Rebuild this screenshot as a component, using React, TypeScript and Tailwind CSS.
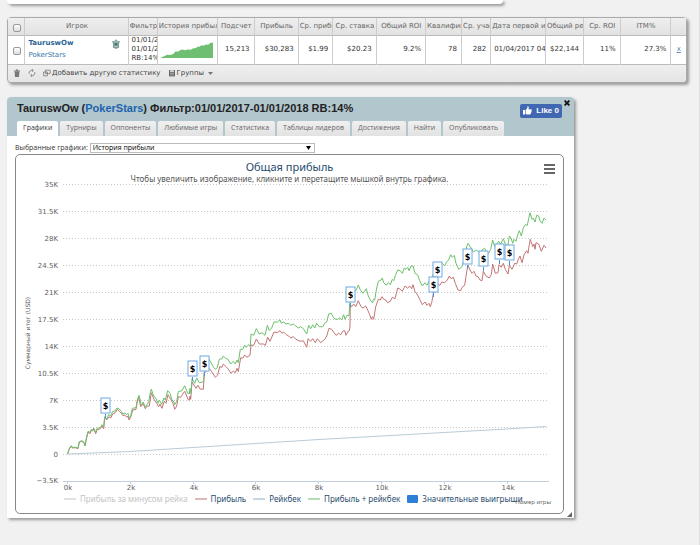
import { useState } from "react"
import { clsx } from "clsx"

const VERDANA = "font-['DejaVu_Sans',Verdana,sans-serif]"
const NARROW = "font-['Open_Sans','Noto_Sans',sans-serif]"
const LUCIDA = "font-['Noto_Sans','Open_Sans',sans-serif]"

interface Column {
  label: string
  width: string
  value: React.ReactNode
  align?: string
}

const columns: Column[] = [
  { label: "Игрок", width: "w-[15.2%]", value: <PlayerCell />, align: "text-left" },
  {
    label: "Фильтр",
    width: "w-[4.3%]",
    value: <>01/01/2017-<br />01/01/2018<br />RB:14%</>,
    align: "text-left",
  },
  { label: "История прибыли", width: "w-[8.9%]", value: <Sparkline /> },
  { label: "Подсчет", width: "w-[5.4%]", value: "15,213" },
  { label: "Прибыль", width: "w-[6.5%]", value: "$30,283" },
  { label: "Ср. прибыль", width: "w-[5.1%]", value: "$1.99" },
  { label: "Ср. ставка", width: "w-[6.4%]", value: "$20.23" },
  { label: "Общий ROI", width: "w-[7.3%]", value: "9.2%" },
  { label: "Квалификация", width: "w-[5.3%]", value: "78" },
  { label: "Ср. участников", width: "w-[4.3%]", value: "282" },
  { label: "Дата первой игры", width: "w-[8.1%]", value: "01/04/2017 04:12", align: "text-left" },
  { label: "Общий рейк", width: "w-[5.6%]", value: "$22,144" },
  { label: "Ср. ROI", width: "w-[5.4%]", value: "11%" },
  { label: "ITM%", width: "w-[7.5%]", value: "27.3%" },
]

const tabs = [
  "Графики",
  "Турниры",
  "Оппоненты",
  "Любимые игры",
  "Статистика",
  "Таблицы лидеров",
  "Достижения",
  "Найти",
  "Опубликовать",
]

const legend = [
  { label: "Прибыль за минусом рейка", swatch: "h-[2px] w-3 bg-[#e2e2e2]", text: "text-[#c4c4c4]" },
  { label: "Прибыль", swatch: "h-[2px] w-3 bg-[#e0b8b8]", text: "text-[#274b6d]" },
  { label: "Рейкбек", swatch: "h-[2px] w-3 bg-[#c8d6e2]", text: "text-[#274b6d]" },
  { label: "Прибыль + рейкбек", swatch: "h-[2px] w-3 bg-[#b4deb4]", text: "text-[#274b6d]" },
  { label: "Значительные выигрыши", swatch: "h-2 w-[11px] rounded-[1px] bg-[#2f7ed8]", text: "text-[#274b6d]" },
]

const yTicks = ["35K", "31.5K", "28K", "24.5K", "21K", "17.5K", "14K", "10.5K", "7K", "3.5K", "0", "−3.5K"]
const xTicks = ["0k", "2k", "4k", "6k", "8k", "10k", "12k", "14k"]

const wins = [
  [105, 406], [192, 369], [204, 364], [350, 295], [437, 270],
  [433, 285], [467, 257], [483, 259], [499, 252], [509, 253],
]

// Series are stored in sections, three units per chart unit, relative to x0/y0
function section(x0: number, y0: number, points: string) {
  return points
    .split(" ")
    .map((p) => {
      const [x, y] = p.split(",").map(Number)
      return `${(x0 + x / 3).toFixed(1)},${(y0 + y / 3).toFixed(1)}`
    })
    .join(" ")
}

const totalSeries = [
  section(10, 340, "173,341 178,325 184,317 187,322 196,322 204,324 208,305 215,302 222,307 225,317 228,300 234,274 240,277 244,268 248,270 251,264 257,277 262,264 267,264 272,262 276,254 281,260 284,230 290,236 296,224 302,228 308,214 315,213 321,204 328,207 334,214 338,222 345,219 350,224 354,220 357,234 362,228 367,205 378,203 382,180 387,166 391,182 394,196 400,186 405,202 410,195 416,186 420,162 424,147 430,165 438,176 444,190 448,180 455,193 462,174 466,180 473,152 480,160 486,180 492,186 494,194 500,184 505,155 516,152 524,137 528,147 533,160 537,160"),
  section(180, 300, "28,282 30,265 33,280 36,236 44,250 50,234 58,248 66,247 71,242 73,215 80,170 88,178 92,187 100,200 106,208 112,203 118,178 126,176 130,168 137,175 144,178 152,192 160,184 166,192 171,180 175,188 181,148 188,148 194,136 198,142 207,134 211,138 213,102 221,106 229,86 238,102 246,98 255,106 262,76 268,92 275,84 282,66 292,66 300,60 304,70 310,66 318,72 326,70 332,76 340,72 347,78 356,84 362,80 370,86 380,102 386,76 392,86 398,74 404,84 410,70 418,80 428,80 434,70 440,66 446,42 454,40 460,52"),
  section(335, 220, "0,297 8,298 14,294 20,299 26,284 30,298 36,286 42,288 44,250 48,240 58,215 64,210 70,195 76,210 84,220 94,206 100,228 108,244 113,248 115,238 119,240 124,210 130,184 138,180 142,174 146,188 154,196 160,188 166,194 172,178 176,182 182,164 188,150 196,152 202,160 208,144 213,148 218,142 222,152 228,138 234,138 240,160 248,165 254,182 262,198 270,188 276,196 282,184 292,170 300,150 314,130"),
  section(440, 200, "5,188 14,198 20,185 26,180 32,164 37,172 43,166 48,190 56,208 66,200 74,170 80,140 84,130 92,142 100,156 110,150 118,158 126,150 134,145 140,158 146,160 152,148 158,120 164,140 170,132 176,124 182,132 190,116 196,132 204,136 208,108 213,114 218,130 222,118 228,124 232,108 238,92 244,108 250,84 256,74 262,76 266,56 270,38 276,58 280,54 285,66 290,46 296,48 300,62 306,70 312,54 318,60"),
].join(" ")

const profitSeries = [
  section(10, 340, "173,341 178,327 184,319 187,324 196,323 204,326 208,307 215,304 222,308 225,318 228,302 234,277 240,281 244,271 248,273 251,267 257,281 262,268 267,268 272,265 276,258 281,266 284,234 290,240 297,230 302,234 308,222 316,218 322,208 328,214 334,220 338,226 345,226 350,232 354,228 357,240 362,232 368,210 378,208 382,184 386,172 392,200 400,192 406,206 412,198 418,198 424,158 432,178 440,190 446,200 450,192 456,205 463,184 468,190 474,164 482,178 489,190 494,208 500,198 505,170 512,172 517,164 524,154 529,165 535,180"),
  section(180, 300, "28,300 30,288 32,298 36,246 40,252 48,265 54,256 60,267 70,268 73,220 88,205 95,215 106,232 113,225 119,200 126,202 130,192 138,200 145,207 153,220 160,213 166,218 171,205 175,215 182,173 188,175 194,165 200,172 210,166 213,135 221,136 229,117 238,132 250,132 256,136 263,112 270,124 282,96 291,98 300,92 306,100 311,96 319,104 326,108 332,114 340,110 348,118 356,122 364,124 370,122 380,142 384,116 392,124 398,116 406,128 412,116 422,128 434,118 440,108 447,85 455,88 462,98 468,106 476,100 482,104 490,92 494,92 498,106 504,94 508,92"),
  section(335, 220, "45,320 46,254 50,260 56,252 62,260 70,242 78,260 84,264 92,258 98,270 104,284 109,298 112,290 116,298 122,260 130,238 136,240 141,230 146,238 152,240 158,248 166,244 172,232 180,236 188,204 196,208 202,214 210,198 218,205 224,198 230,206 234,194 240,215 246,222 254,238 262,254 270,246 276,256 282,250 286,260 290,248 296,215 306,188 313,196"),
  section(440, 200, "0,256 5,246 14,248 22,240 28,228 33,236 40,232 46,250 54,270 62,272 66,262 74,256 80,215 84,196 90,210 96,220 102,214 108,228 114,230 120,240 126,242 130,214 138,228 148,234 154,224 158,192 166,220 174,218 177,194 184,202 190,190 196,208 204,222 208,196 216,208 224,190 230,192 234,180 240,168 246,188 252,164 260,152 264,160 268,134 271,118 278,140 282,132 285,148 288,128 296,132 304,154 312,136 318,144"),
].join(" ")

function PlayerCell() {
  return (
    <div className="flex items-start justify-between pr-1">
      <div className="flex flex-col gap-[3px]">
        <a href="#player" className="font-bold text-[#2a6496]">TauruswOw</a>
        <a href="#network" className="text-[#3a76a8]">PokerStars</a>
      </div>
      <svg viewBox="0 0 8 10" className="h-[10px] w-2" aria-hidden="true">
        <path d="M4 0 5.2 1.8 8 2.6 6.8 5 7.2 8.6 4 10 .8 8.6 1.2 5 0 2.6 2.8 1.8Z" fill="#7f9c99" />
        <path d="M2.2 3h3.6M2.4 7.4h3.2" stroke="#dfe9e4" strokeWidth=".7" />
        <circle cx="4" cy="5.2" r="1.2" fill="#37766d" />
      </svg>
    </div>
  )
}

function Sparkline() {
  return (
    <svg viewBox="0 0 51 16" className="block h-4 w-full" preserveAspectRatio="none" aria-hidden="true">
      <path
        d="M0 16V15.4L3 14.2 6 12.8 9 12.9 12 12 14 9.4 17 9.6 19 8 21 7.4 23 8.2 26 7.6 29 7.8 31 6.4 34 6 36 4.6 37 5 39 3.4 42 3.6 44 2.4 46 2.8 48 1 51 .4V16Z"
        fill="#6fbf73"
      />
    </svg>
  )
}

function StatsTable() {
  return (
    <section className="rounded-[4px] border border-[#aaa] bg-[#ececec] shadow-[2px_2px_3px_#999]">
      <table className="w-full table-fixed border-collapse text-[7px] leading-[9px] text-[#333]">
        <thead>
          <tr className="h-[17px] bg-linear-to-b from-[#efefef] to-[#e2e2e2] text-[#666]">
            <th className="w-[2.5%] border-r border-[#ccc] pt-1 pl-px">
              <TickBox label="Выбрать все" />
            </th>
            {columns.map((col) => (
              <th
                key={col.label}
                className={clsx("overflow-hidden border-r border-[#ccc] font-normal whitespace-nowrap", col.width)}
              >
                <div className="ml-px flex justify-center-safe overflow-hidden">{col.label}</div>
              </th>
            ))}
            <th className="w-[2.2%]" aria-label="Удалить" />
          </tr>
        </thead>
        <tbody>
          <tr className="h-[29px] border-y border-[#bbb] bg-white">
            <td className="border-r border-[#ccc] pt-1 pl-px text-center">
              <TickBox label="Выбрать TauruswOw" />
            </td>
            {columns.map((col) => (
              <td
                key={col.label}
                className={clsx(
                  "overflow-hidden border-r border-[#ccc] pr-1 pl-[3px] whitespace-nowrap",
                  col.align ?? "text-right"
                )}
              >
                {col.value}
              </td>
            ))}
            <td className="text-center">
              <a href="#remove" className="text-[#5b86b3] underline">x</a>
            </td>
          </tr>
        </tbody>
      </table>
      <div className="flex h-[17px] items-center gap-[7px] rounded-b-[4px] bg-linear-to-b from-[#efefef] to-[#e4e4e4] px-[5px] text-[7px] text-[#444]">
        <button aria-label="Удалить">
          <svg viewBox="0 0 8 8" className="size-2" fill="#777">
            <path d="M1 1.6h6v.8H1zM3 .6h2v1H3zM1.6 2.8h4.8L6 8H2z" />
          </svg>
        </button>
        <button aria-label="Обновить">
          <svg viewBox="0 0 8 8" className="size-2" fill="none" stroke="#777" strokeWidth=".8">
            <path d="M1.3 5A2.8 2.8 0 0 1 4.8 1.4M6.7 3A2.8 2.8 0 0 1 3.2 6.6M4 .2 5.4 1.5 4 2.8M4 5.2 2.6 6.5 4 7.8" />
          </svg>
        </button>
        <button className="flex items-center gap-px">
          <svg viewBox="0 0 8 8" className="size-2" fill="#eee" stroke="#777" strokeWidth=".8">
            <path d="M.6 3h3.8v3.8H.6zM2.4 1.2h4.8v3.4H2.4z" />
          </svg>
          Добавить другую статистику
        </button>
        <button className="flex items-center gap-px">
          <svg viewBox="0 0 8 8" className="size-2">
            <path d="M1 1h6v6.4H1z" fill="#666" />
            <path d="M2.4 1.2h3.2v1.8H2.4zM2 4.6h4M2 6h4" fill="#ddd" stroke="#ddd" strokeWidth=".5" />
          </svg>
          Группы
          <svg viewBox="0 0 5 3" className="ml-[3px] h-[3px] w-[5px]" fill="#777">
            <path d="M0 0h5L2.5 3z" />
          </svg>
        </button>
      </div>
    </section>
  )
}

function TickBox({ label }: { label: string }) {
  return (
    <input
      type="checkbox"
      aria-label={label}
      className="size-2 appearance-none rounded-[2px] border border-[#999] bg-linear-to-b from-white to-[#ddd] align-middle checked:bg-[#777]"
    />
  )
}

function ProfitChart() {
  return (
    <svg
      viewBox="16 183 547 311"
      className={clsx("block w-full overflow-visible", VERDANA)}
      role="img"
      aria-label="Общая прибыль"
    >
      <g stroke="#c8c8c8" strokeWidth="1" strokeDasharray="1 2">
        {yTicks.slice(0, -1).map((tick, i) => (
          <line key={tick} x1="63" x2="549" y1={184.5 + Math.round(i * 26.95)} y2={184.5 + Math.round(i * 26.95)} />
        ))}
      </g>
      <g fill="#606060" fontSize="7" textAnchor="end">
        {yTicks.map((tick, i) => (
          <text key={tick} x="58" y={187 + Math.round(i * 26.95)}>{tick}</text>
        ))}
      </g>
      <path d="M63 481.5H549" stroke="#c0d0e0" />
      <g fill="#606060" fontSize="7" textAnchor="middle">
        {xTicks.map((tick, i) => (
          <g key={tick}>
            <path d={`M${67.5 + Math.round(i * 62.8)} 481v3`} stroke="#c0d0e0" />
            <text x={68 + Math.round(i * 62.8)} y="490">{tick}</text>
          </g>
        ))}
      </g>
      <text transform="translate(30 333) rotate(-90)" fill="#555" fontSize="6" textAnchor="middle">
        Суммарный итог (USD)
      </text>
      <g fill="none" strokeWidth="1" strokeLinejoin="round">
        <path d="M67.5 454 130 451.5 193 447.5 256 443.5 319 439.5 382 436 444 432.5 507 429 546 426.5" stroke="#b9cbd8" />
        <polyline points={profitSeries} stroke="#c47474" />
        <polyline points={totalSeries} stroke="#6cc06c" />
      </g>
      {wins.map(([x, y]) => (
        <g key={x}>
          <path d={`M${x + 0.5} ${y + 8}v4`} stroke="#4a90d9" />
          <rect x={x - 4} y={y - 8} width="9" height="15" fill="#fff" stroke="#6fa8e6" />
          <text x={x + 0.5} y={y + 3} fontSize="8" fontWeight="bold" textAnchor="middle">$</text>
        </g>
      ))}
    </svg>
  )
}

function ChartCard() {
  return (
    <div className={clsx("relative rounded-[5px] border border-[#888] bg-white pb-[9px]", LUCIDA)}>
      <h2 className="pt-[5px] text-center text-[11px] leading-[14px] text-[#274b6d]">Общая прибыль</h2>
      <p className="text-center text-[8px] leading-[9px] text-[#555]">
        Чтобы увеличить изображение, кликните и перетащите мышкой внутрь графика.
      </p>
      <button aria-label="Меню графика" className="absolute top-[9px] right-2 flex w-[11px] flex-col gap-[2px]">
        <span className="h-[2px] bg-[#666]" />
        <span className="h-[2px] bg-[#666]" />
        <span className="h-[2px] bg-[#666]" />
      </button>
      <ProfitChart />
      <div className="flex gap-[7px] pl-12 whitespace-nowrap">
        {legend.map((item) => (
          <button key={item.label} className={clsx("flex items-center gap-1 text-[8px] leading-[10px]", item.text)}>
            <span className={item.swatch} />
            {item.label}
          </button>
        ))}
      </div>
      <span className="absolute right-3 bottom-[7px] text-[6px] leading-2 text-[#666]">Номер игры</span>
    </div>
  )
}

function PlayerPanel() {
  const [active, setActive] = useState("Графики")

  return (
    <section className="relative w-full max-w-[567px] rounded-t-[4px] bg-white pb-1 shadow-[2px_2px_3px_#999]">
      <header className="rounded-t-[4px] bg-[#b2c6ce]">
        <div className="flex h-6 items-center justify-between pr-3 pl-[10px] font-['Liberation_Sans',Arial,sans-serif]">
          <h1 className="text-[11px] font-bold text-[#222]">
            TauruswOw (<a href="#network" className="text-[#1c63ad]">PokerStars</a>) Фильтр:01/01/2017-01/01/2018 RB:14%
          </h1>
          <button className="mt-1 flex h-[14px] items-center gap-1 rounded-[2px] bg-[#4267b2] px-[3px] text-[8px] font-bold text-white">
            <svg viewBox="0 0 9 9" className="size-[9px]" fill="#fff">
              <path d="M0 4h2v4.6H0zM2.6 4 4.4 2V.3C5.6 0 6 .9 5.7 2.2L5.4 3.2H8.2Q9 3.6 8.6 4.4 8.9 5 8.4 5.6 8.6 6.3 8 6.8 8.1 8 7 8.4H4L2.6 7.9Z" />
            </svg>
            Like 0
          </button>
        </div>
        <div role="tablist" className={clsx("flex gap-[2px] px-[10px]", NARROW)}>
          {tabs.map((tab) => (
            <button
              key={tab}
              role="tab"
              aria-selected={tab === active}
              onClick={() => setActive(tab)}
              className={clsx(
                "h-[15px] rounded-t-[2px] px-[6px] text-[7px] whitespace-nowrap",
                tab === active ? "bg-white text-[#333]" : "bg-linear-to-b from-[#f0f0f0] to-[#e2e2e2] text-[#666]"
              )}
            >
              {tab}
            </button>
          ))}
        </div>
      </header>
      <button aria-label="Закрыть" className="absolute top-[3px] right-1">
        <svg viewBox="0 0 6 6" className="size-[6px]" stroke="#111" strokeWidth="1.8">
          <path d="M.6.6 5.4 5.4M5.4.6.6 5.4" />
        </svg>
      </button>
      <div className="pt-[7px] pr-[10px] pl-2">
        <div className={clsx("flex h-[11px] items-center gap-[2px] text-[7px] text-[#333]", NARROW)}>
          <label htmlFor="graph">Выбранные графики:</label>
          <div className="relative w-[41%]">
            <select
              id="graph"
              className="block h-[10px] w-full appearance-none border border-[#bbb] bg-white pl-[2px] text-[7px] leading-2 text-black"
            >
              <option>История прибыли</option>
            </select>
            <svg viewBox="0 0 5 4" className="pointer-events-none absolute top-[3px] right-1 h-1 w-[5px]">
              <path d="M0 0h5L2.5 4z" />
            </svg>
          </div>
        </div>
        <ChartCard />
      </div>
      <svg viewBox="0 0 5 5" className="absolute right-[2px] bottom-px size-[5px]" fill="#666">
        <path d="M5 0v5H0z" />
      </svg>
    </section>
  )
}

export default function App() {
  return (
    <main className={clsx("min-h-screen border-r border-[#ddd] bg-[#f1f1f1] pr-3 pl-[7px]", VERDANA)}>
      <div className="mb-[13px] h-1 w-[73%] rounded-b-[4px] bg-white shadow-[2px_2px_3px_#999]" />
      <StatsTable />
      <div className="mt-[14px]">
        <PlayerPanel />
      </div>
    </main>
  )
}
